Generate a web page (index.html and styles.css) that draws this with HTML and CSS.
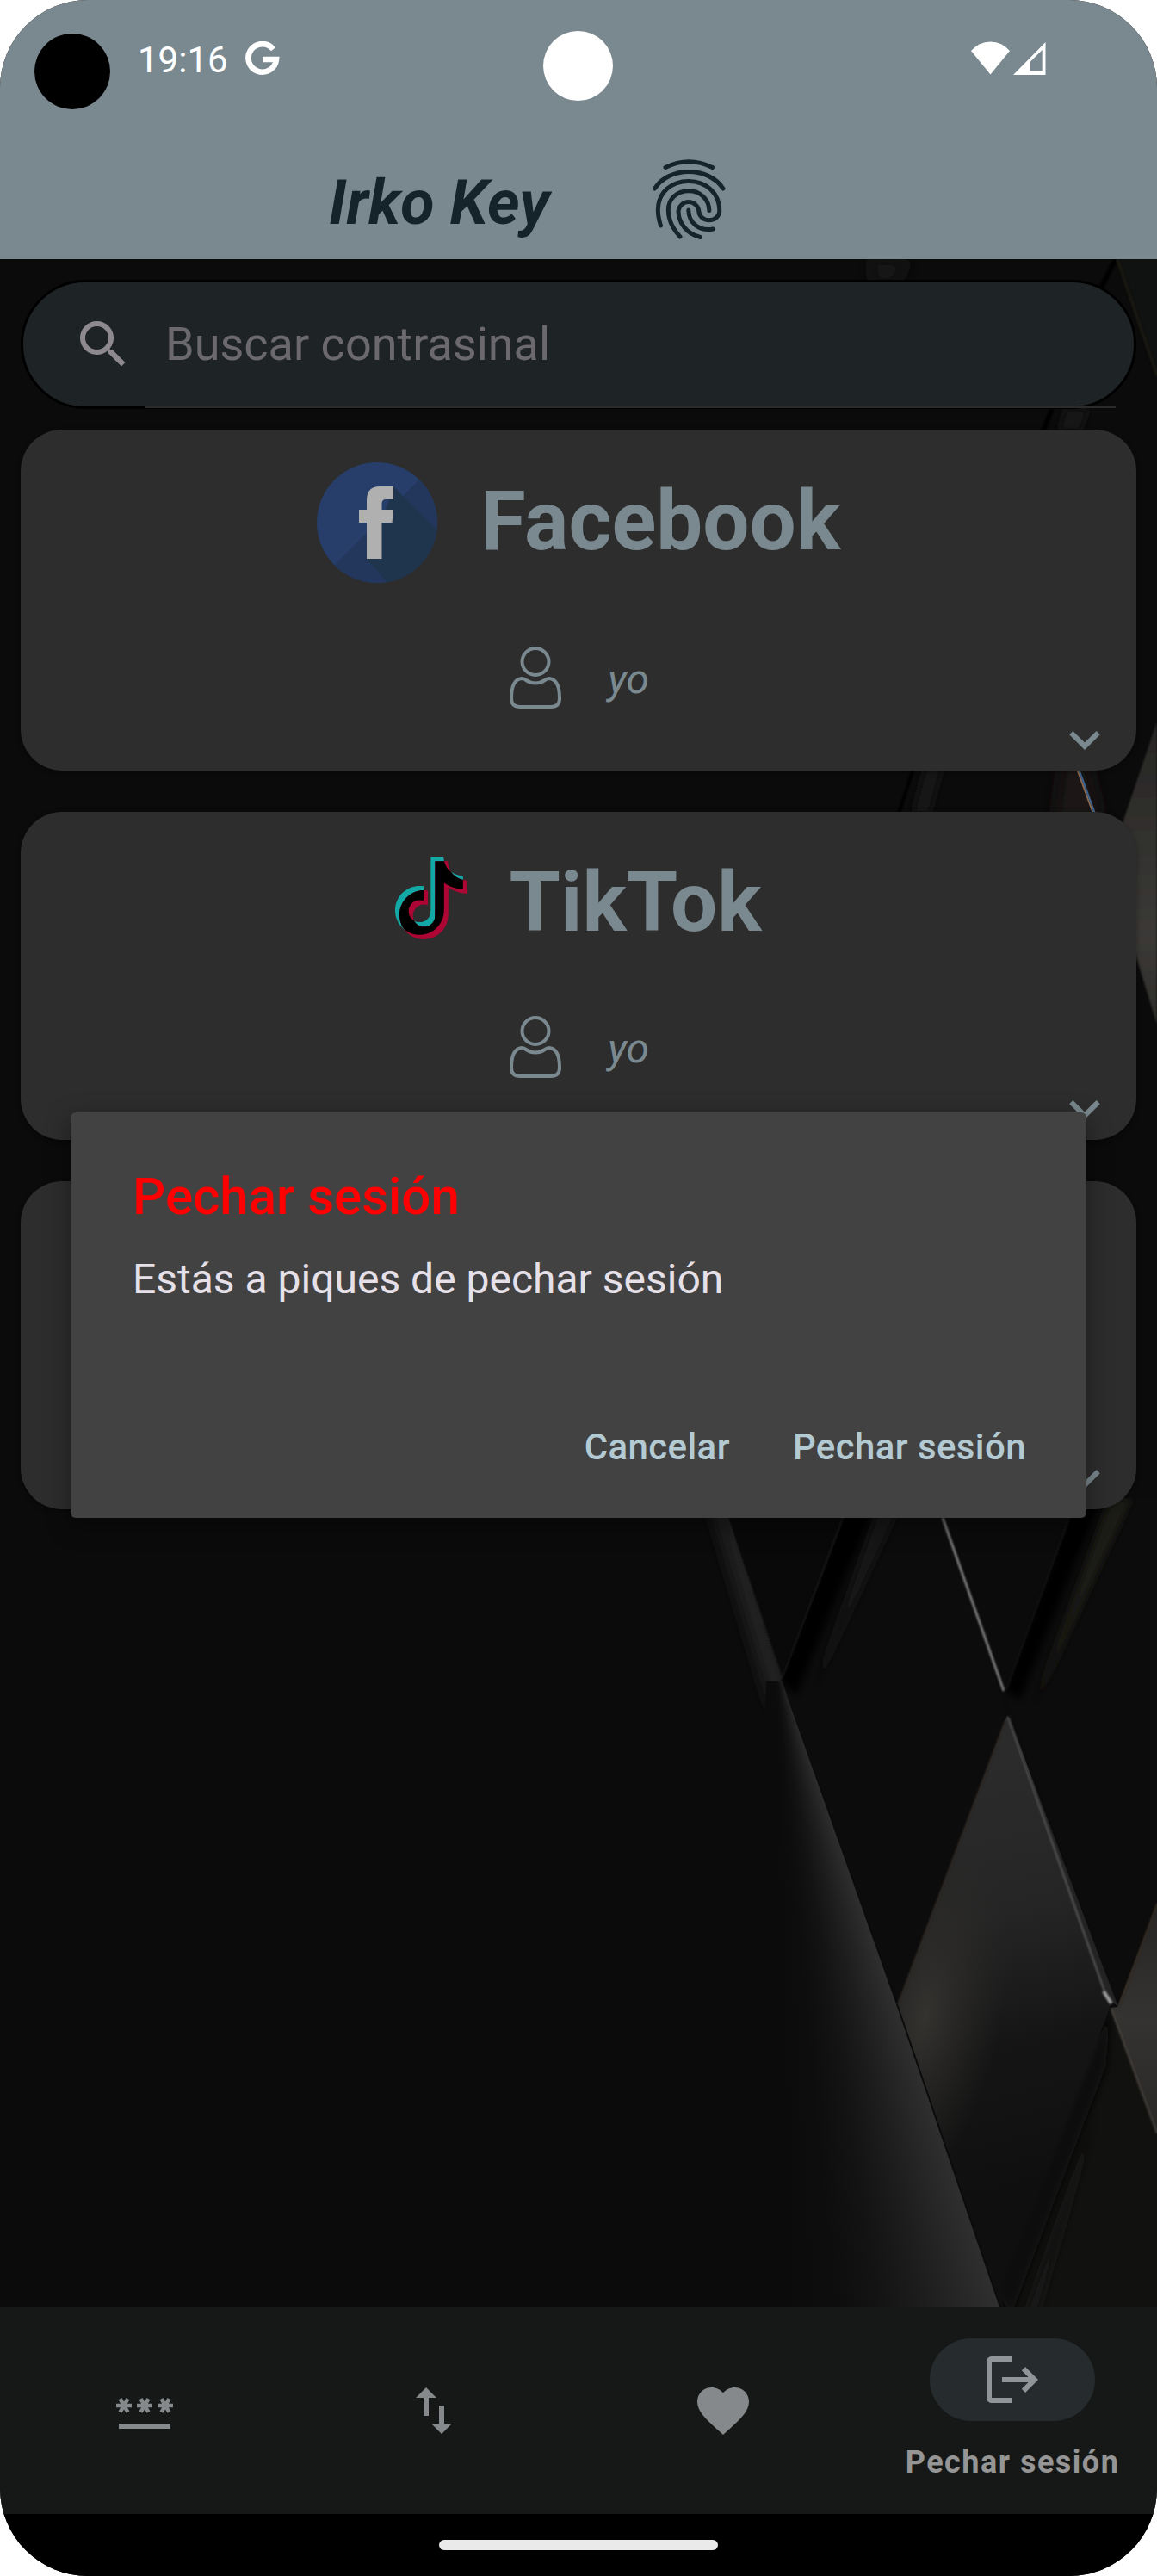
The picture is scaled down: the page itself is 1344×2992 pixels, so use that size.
FILE: index.html
```html
<!DOCTYPE html>
<html lang="gl">
<head>
<meta charset="utf-8">
<title>Irko Key</title>
<link rel="stylesheet" href="styles.css">
</head>
<body>
<div class="screen">
  <div class="wallpaper">
    <svg width="1344" height="2992" viewBox="0 0 1344 2992">
      <defs>
        <filter id="b2" filterUnits="userSpaceOnUse" x="700" y="200" width="700" height="2600"><feGaussianBlur stdDeviation="1.2"/></filter>
        <filter id="b6" filterUnits="userSpaceOnUse" x="700" y="200" width="700" height="2600"><feGaussianBlur stdDeviation="5"/></filter>
        <filter id="b8" filterUnits="userSpaceOnUse" x="700" y="200" width="700" height="2600"><feGaussianBlur stdDeviation="10"/></filter>
        <linearGradient id="facet" gradientUnits="userSpaceOnUse" x1="1110" y1="2060" x2="1225" y2="2540">
          <stop offset="0" stop-color="#2b2b2b"/><stop offset=".35" stop-color="#252525"/><stop offset=".65" stop-color="#151515"/><stop offset="1" stop-color="#0f0f0f"/>
        </linearGradient>
        <radialGradient id="warm" gradientUnits="userSpaceOnUse" cx="1075" cy="2340" r="110" gradientTransform="translate(1075 2340) rotate(10) scale(.8 1.9) translate(-1075 -2340)">
          <stop offset="0" stop-color="#343330"/><stop offset=".5" stop-color="#2c2b29" stop-opacity=".6"/><stop offset="1" stop-color="#2a2927" stop-opacity="0"/>
        </radialGradient>
        <linearGradient id="side" gradientUnits="userSpaceOnUse" x1="0" y1="840" x2="0" y2="1190">
          <stop offset="0" stop-color="#272624"/><stop offset=".7" stop-color="#3b3937"/><stop offset="1" stop-color="#2f2c2a"/>
        </linearGradient>
        <linearGradient id="corner" gradientUnits="userSpaceOnUse" x1="0" y1="2211" x2="0" y2="2478">
          <stop offset="0" stop-color="#262523"/><stop offset=".5" stop-color="#343331"/><stop offset="1" stop-color="#292827"/>
        </linearGradient>
        <clipPath id="facetClip"><path d="M1170 1992L1043 2328L1163 2680L1290 2330Z"/></clipPath>
        <clipPath id="tileA"><path d="M990 1740L908 1951L1043 2328L1170 1990L1088 1740Z"/></clipPath>
        <clipPath id="tileB"><path d="M1250 1740L1166 1966L1299 2331L1344 2211V1740Z"/></clipPath>
        <clipPath id="tileC"><path d="M1290 2332L1161 2658L1168 2680H1344V2478Z"/></clipPath>
        <clipPath id="outer"><path d="M700 1740H838L908 1951L1043 2328V2400H700Z"/></clipPath>
      </defs>
      <path d="M1010 301H1060L1040 330H1015Z" fill="#161513" filter="url(#b8)"/>
      <path d="M1296 301H1344V440Z" fill="#101211"/>
      <g fill="none" filter="url(#b2)">
        <path d="M1296 301L1276 340M1222 475L1210 505" stroke="#060606" stroke-width="6"/>
        <path d="M1298 301L1344 436" stroke="#181310" stroke-width="4"/>
      </g>
      <path d="M1238 475H1265L1255 500H1230Z" fill="#161616" filter="url(#b6)"/>
      <path d="M1062 890L1044 945" stroke="#060606" stroke-width="4" filter="url(#b2)"/>
      <path d="M1075 890H1095L1080 945H1060Z" fill="#151515" filter="url(#b6)"/>

      <path d="M845 1763L908 1951L985 1740Z" fill="#090909"/>
      <g clip-path="url(#tileA)">
        <path d="M979 1740L908 1951L1043 2328L1170 1990L1095 1740Z" fill="#0c0c0c"/>
        <path d="M985 1740L905 1950L925 1970L1020 1740Z" fill="#050505" filter="url(#b6)"/>
        <path d="M1025 1740L945 1965L1050 1740Z" fill="#191919" filter="url(#b6)"/>
      </g>
      <g clip-path="url(#tileB)">
        <path d="M1250 1740L1166 1966L1299 2331L1344 2211V1740Z" fill="#0c0c0c"/>
        <path d="M1250 1740L1166 1962L1185 1975L1280 1740Z" fill="#050505" filter="url(#b6)"/>
        <path d="M1290 1740L1200 1985L1315 1740Z" fill="#1b1a18" filter="url(#b6)"/>
      </g>
      <g clip-path="url(#facetClip)">
        <path d="M1170 1992L1043 2328L1163 2680L1290 2330Z" fill="url(#facet)"/>
        <path d="M1170 1992L1043 2328L1163 2680L1290 2330Z" fill="url(#warm)"/>
      </g>
      <g clip-path="url(#tileC)">
        <path d="M1290 2332L1161 2658L1168 2680L1344 2680L1344 2478Z" fill="#111110"/>
        <path d="M1290 2332L1155 2658L1175 2690L1285 2400Z" fill="#070707" filter="url(#b6)"/>
        <path d="M1275 2450L1190 2690H1205Z" fill="#181716" filter="url(#b6)"/>
      </g>
      <path d="M1298 2331L1344 2211V2478L1290 2332Z" fill="url(#corner)"/>
      <g clip-path="url(#outer)">
        <path d="M845 1740L915 1960L900 1990L825 1740Z" fill="#272727" filter="url(#b8)"/>
      </g>
      <path d="M1172 1994L1299 2331L1284 2318Z" fill="#232323"/>
      <g fill="none" filter="url(#b2)">
        <path d="M845 1763L908 1950" stroke="#242424" stroke-width="2"/>
        <path d="M979 1763L909 1948M1242 1763L1169 1962" stroke="#151515" stroke-width="2"/>
        <path d="M1095 1763L1166 1964" stroke="#868686" stroke-width="2.6"/>
        <path d="M1171 1994L1284 2316" stroke="#5a5a5a" stroke-width="2"/>
        <path d="M1282 2313L1291 2327" stroke="#a0a0a0" stroke-width="4"/>
        <path d="M1168 1998L1043 2328" stroke="#2d2723" stroke-width="2"/>
        <path d="M1344 2211L1300 2330" stroke="#33281f" stroke-width="2"/>
        <path d="M1291 2334L1344 2478" stroke="#47423d" stroke-width="2"/>
      </g>
      <path d="M1344 838L1304 956L1304 1060L1344 1190Z" fill="url(#side)" filter="url(#b2)"/>
      <path d="M1235 880H1262L1280 950H1225Z" fill="#1b1918" filter="url(#b8)"/>
      <path d="M1251 893L1270 945" stroke="#8a6a55" stroke-width="2"/>
      <path d="M1253 893L1272 945" stroke="#3f638f" stroke-width="2"/>
    </svg>
    <div class="glow"></div>
  </div>

  <header class="header">
    <div class="status">
      <span class="dot"></span>
      <span class="time">19:16</span>
      <svg class="g" width="40" height="40" viewBox="0 0 40 40"><path d="M32.5 9.2A16.3 16.3 0 1 0 36 21H20" fill="none" stroke="#fff" stroke-width="6.6"/></svg>
      <svg class="signals" width="88" height="40" viewBox="1129 48 88 40" fill="#fff"><path d="M1129 59Q1138 48.500 1151.500 48.500T1174 59L1151.500 86.500Z"/><path fill-rule="evenodd" d="M1178 87L1215.500 49V87ZM1198 82.300H1211.700V58L1198 71.500Z"/></svg>
      <span class="camera"></span>
    </div>
    <div class="titlebar">
      <h1>Irko Key</h1>
      <svg width="88" height="97" viewBox="756 183 88 97" fill="none" stroke="#15242a" stroke-width="5" stroke-linecap="round">
        <path d="M773 194.500Q800 181 827.500 194.500M760.500 219C777 193 823 193 840 219"/>
        <path d="M767.500 262C765 254 764.300 249 764.300 244C764.300 223 780 210.500 800 210.500S835.800 224 835.800 245A12 10.800 0 0 1 811.800 245A12 12 0 0 0 788 245C788 259 798 272 813.500 275.500"/>
        <path d="M790 275C780 264 776.300 255 776.300 244C776.300 231 786 221.700 800 221.700S823.800 232 823.800 244.500"/>
        <path d="M799.800 244C800 259 812 269 828.500 266"/>
      </svg>
    </div>
  </header>

  <main class="content">
    <div class="search">
      <svg width="72" height="72" viewBox="0 0 24 24" fill="#8d898f"><path d="M15.500 14h-.79l-.28-.27A6.471 6.471 0 0 0 16 9.500 6.500 6.500 0 1 0 9.500 16c1.610 0 3.090-.59 4.230-1.570l.27.28v.79l5 4.990L20.490 19l-4.990-5zm-6 0C7.010 14 5 11.990 5 9.500S7.010 5 9.500 5 14 7.010 14 9.500 11.990 14 9.500 14z"/></svg>
      <span>Buscar contrasinal</span>
      <i class="underline"></i>
    </div>

    <article class="card card-tall">
      <div class="head">
        <svg width="140" height="140" viewBox="0 0 140 140">
          <defs><clipPath id="fbc"><circle cx="70" cy="70" r="70"/></clipPath></defs>
          <g clip-path="url(#fbc)">
            <path fill="#263e69" d="M0 0h140v140H0z"/>
            <path fill="#22375b" d="M122 17L160 60V160H60L15 125Z"/>
            <path fill="#1f354e" d="M89 28L150 90V160H100L57 111L75 70Z"/>
          </g>
          <path fill="#b0b0b0" d="M58 112V70H49V55H58V44Q58 28 73 28H89V43H80Q75.500 43 75.500 48V55H89L87.500 70H75.500V112Z"/>
        </svg>
        <h2>Facebook</h2>
      </div>
      <div class="user">
        <svg width="72" height="72" viewBox="0 0 72 72" fill="none" stroke="#7a898f" stroke-width="4"><circle cx="36" cy="17.500" r="15.500"/><path d="M20 37C10 38 8 50 8 60Q8 70 18 70H54Q64 70 64 60C64 50 62 38 52 37Q49 37 47 39Q36 46 25 39Q23 37 20 37Z"/></svg>
        <em>yo</em>
      </div>
      <svg class="chev" width="36" height="22" viewBox="6 8.590 12 7.410" fill="#7a898f"><path d="M16.590 8.590L12 13.170 7.410 8.590 6 10l6 6 6-6z"/></svg>
    </article>

    <article class="card">
      <div class="head">
        <svg width="84" height="96" viewBox="0 0 84 96">
          <defs>
            <path id="note" transform="scale(3.780) translate(-1.570 0)" d="M12.525.02c1.310-.02 2.610-.01 3.910-.02.08 1.530.63 3.090 1.750 4.170 1.120 1.110 2.700 1.620 4.240 1.790v4.030c-1.440-.05-2.890-.35-4.200-.97-.57-.26-1.100-.59-1.620-.93-.01 2.920.01 5.840-.02 8.750-.08 1.400-.54 2.790-1.350 3.940-1.310 1.920-3.580 3.170-5.910 3.210-1.430.08-2.860-.31-4.080-1.030-2.020-1.190-3.440-3.370-3.650-5.710-.02-.5-.03-1-.01-1.490.18-1.900 1.120-3.720 2.580-4.960 1.660-1.440 3.980-2.130 6.150-1.720.02 1.480-.04 2.960-.04 4.440-.99-.32-2.150-.23-3.020.37-.63.41-1.110 1.040-1.360 1.750-.21.51-.15 1.070-.14 1.610.24 1.640 1.820 3.020 3.500 2.870 1.120-.01 2.190-.66 2.770-1.610.19-.33.4-.67.41-1.060.1-1.790.06-3.570.07-5.360.01-4.030-.01-8.050.02-12.070z"/>
            <clipPath id="noteClip"><use href="#note"/></clipPath>
          </defs>
          <use href="#note" fill="#12a8a5"/>
          <use href="#note" x="5" y="5.200" fill="#ad0634"/>
          <g clip-path="url(#noteClip)"><use href="#note" x="5" y="5.200" fill="#000"/></g>
        </svg>
        <h2>TikTok</h2>
      </div>
      <div class="user">
        <svg width="72" height="72" viewBox="0 0 72 72" fill="none" stroke="#7a898f" stroke-width="4"><circle cx="36" cy="17.500" r="15.500"/><path d="M20 37C10 38 8 50 8 60Q8 70 18 70H54Q64 70 64 60C64 50 62 38 52 37Q49 37 47 39Q36 46 25 39Q23 37 20 37Z"/></svg>
        <em>yo</em>
      </div>
      <svg class="chev" width="36" height="22" viewBox="6 8.590 12 7.410" fill="#7a898f"><path d="M16.590 8.590L12 13.170 7.410 8.590 6 10l6 6 6-6z"/></svg>
    </article>

    <article class="card card-empty">
      <svg class="chev" width="36" height="22" viewBox="6 8.590 12 7.410" fill="#7a898f"><path d="M16.590 8.590L12 13.170 7.410 8.590 6 10l6 6 6-6z"/></svg>
    </article>
  </main>

  <nav class="nav">
    <a class="item"><svg width="72" height="72" viewBox="0 0 24 24"><path d="M2 17h20v2H2zM3.150 12.950L4 11.470l.85 1.480 1.300-.75-.85-1.480H7v-1.500H5.300l.85-1.470L4.850 7 4 8.470 3.150 7l-1.300.75.85 1.470H1v1.500h1.700l-.85 1.480zM9.850 12.200l1.300.75.85-1.480.85 1.480 1.300-.75-.85-1.480H15v-1.500h-1.700l.85-1.470L12.850 7 12 8.470 11.150 7l-1.300.75.85 1.470H9v1.500h1.700zM23 9.220h-1.700l.85-1.470-1.300-.75L20 8.470 19.150 7l-1.300.75.85 1.470H17v1.500h1.700l-.85 1.480 1.300.75.85-1.480.85 1.480 1.300-.75-.85-1.480H23z"/></svg></a>
    <a class="item"><svg width="72" height="72" viewBox="0 0 24 24"><path d="M9 3L5 6.990h3V14h2V6.990h3L9 3zm7 14.010V10h-2v7.010h-3L15 21l4-3.990h-3z"/></svg></a>
    <a class="item"><svg width="72" height="72" viewBox="0 0 24 24"><path d="M12 21.350l-1.450-1.320C5.400 15.360 2 12.280 2 8.500 2 5.420 4.420 3 7.500 3c1.740 0 3.410.81 4.500 2.090C13.090 3.810 14.760 3 16.500 3 19.580 3 22 5.420 22 8.500c0 3.780-3.400 6.860-8.550 11.540z"/></svg></a>
    <a class="item active">
      <span class="pill"><svg width="72" height="72" viewBox="0 0 24 24"><path d="M17 7l-1.410 1.420L18.170 11H8v2h10.170l-2.580 2.580L17 17l5-5zM4 5h8V3H4c-1.100 0-2 .9-2 2v14c0 1.100.9 2 2 2h8v-2H4z"/></svg></span>
      <span class="label">Pechar sesión</span>
    </a>
  </nav>
  <div class="gesture"><span></span></div>

  <div class="dialog">
    <h3>Pechar sesión</h3>
    <p>Estás a piques de pechar sesión</p>
    <div class="actions"><span>Cancelar</span><span>Pechar sesión</span></div>
  </div>
</div>
</body>
</html>
```
FILE: styles.css
```css
* { box-sizing: border-box; }
body { margin: 0; background: #fff; font-family: Roboto, "Liberation Sans", sans-serif; }
h1, h2, h3, p { margin: 0; }
svg { display: block; flex: none; }

.screen {
  position: relative;
  display: flex;
  flex-direction: column;
  width: 1344px;
  height: 2992px;
  border-radius: 102px;
  overflow: hidden;
  background: #0b0b0b;
}
.wallpaper { position: absolute; inset: 0; }
.glow {
  position: absolute;
  inset: 0;
  background: conic-gradient(from 160deg at 900px 1920px, #323232 0deg, #292929 3deg, #1d1d1d 7deg, #131313 11deg, #0d0d0d 15deg, #0b0b0b 18.500deg, #0b0b0b 360deg);
  clip-path: polygon(908px 1953px, 1041px 2328px, 1161px 2680px, 860px 2680px, 890px 1953px);
}

.header { position: relative; height: 301px; background: #7a898f; }
.status { display: flex; align-items: center; height: 140px; padding: 0 128px 0 40px; }
.dot { width: 88px; height: 88px; margin-top: 26px; border-radius: 50%; background: #000; }
.time { margin-left: 32px; color: #fff; font-size: 42px; line-height: 50px; }
.g { margin: -4px 0 0 20px; }
.signals { margin: -4px 0 0 auto; }
.camera { position: absolute; left: 631px; top: 36px; width: 81px; height: 81px; border-radius: 50%; background: #fff; }
.titlebar { display: flex; align-items: center; height: 161px; padding: 30px 0 0 382px; }
.titlebar h1 { width: 374px; color: #15242a; font-size: 72px; line-height: 84px; font-weight: 700; font-style: italic; }
.titlebar svg { margin-bottom: 8px; }

.content { position: relative; flex: 1; display: flex; flex-direction: column; padding: 24px 24px 0; }
.search {
  position: relative;
  display: flex;
  align-items: center;
  height: 150px;
  margin-bottom: 24px;
  padding-left: 57px;
  border: 3px solid #000;
  border-radius: 75px;
  background: #1e2325;
}
.search span { margin-left: 36px; color: #6b696e; font-size: 54px; line-height: 64px; }
.underline { position: absolute; left: 141px; right: 21px; bottom: -2px; height: 2px; background: #292b2d; }

.card {
  display: flex;
  flex-direction: column;
  height: 381px;
  margin-bottom: 48px;
  padding-top: 37px;
  border-radius: 48px;
  background: #2d2d2d;
  box-shadow: 0 2px 6px #0005;
}
.head { display: flex; align-items: center; justify-content: center; gap: 48px; height: 125px; }
.head h2 { margin-top: 11px; color: #7a898f; font-size: 96px; line-height: 112px; font-weight: 700; }
.card-tall { height: 396px; }
.card-tall .head { height: 142px; gap: 50px; }
.card-tall .head h2 { margin-top: -4px; }
.card-tall .user { margin-top: 73px; }
.user { display: flex; align-items: center; justify-content: center; gap: 48px; height: 72px; margin-top: 75px; padding-right: 4px; }
.user em { margin-top: 3px; color: #7a898f; font-size: 48px; line-height: 56px; }
.chev { align-self: flex-end; margin: 26px 42px 0 0; }
.card-empty { justify-content: flex-end; padding-bottom: 24px; }

.nav { position: relative; display: grid; grid-template-columns: repeat(4, 1fr); height: 240px; background: #161817; }
.item { display: flex; flex-direction: column; align-items: center; justify-content: center; fill: #85898b; }
.active { justify-content: flex-start; padding-top: 36px; fill: #8f9598; }
.pill { display: flex; align-items: center; justify-content: center; width: 192px; height: 96px; border-radius: 48px; background: #262b2e; }
.label { margin-top: 24px; color: #959595; font-size: 36px; line-height: 48px; font-weight: 700; letter-spacing: 1.5px; white-space: nowrap; }
.gesture { position: relative; height: 72px; padding-top: 30px; background: #000; }
.gesture span { display: block; width: 324px; height: 12px; margin: 0 auto; border-radius: 6px; background: #eaeaea; }

.dialog {
  position: absolute;
  left: 82px;
  top: 1292px;
  width: 1180px;
  height: 471px;
  padding: 63px 70px 0 72px;
  border-radius: 6px;
  background: #424242;
  box-shadow: 0 8px 30px #0006;
}
.dialog h3 { color: #f00; font-size: 60px; line-height: 70px; font-weight: 500; }
.dialog p { margin-top: 33px; color: #e6e0e9; font-size: 48px; line-height: 56px; }
.actions { display: flex; justify-content: flex-end; gap: 73px; margin-top: 142px; color: #b4cad3; font-size: 42px; line-height: 50px; font-weight: 500; letter-spacing: .4px; }
```
